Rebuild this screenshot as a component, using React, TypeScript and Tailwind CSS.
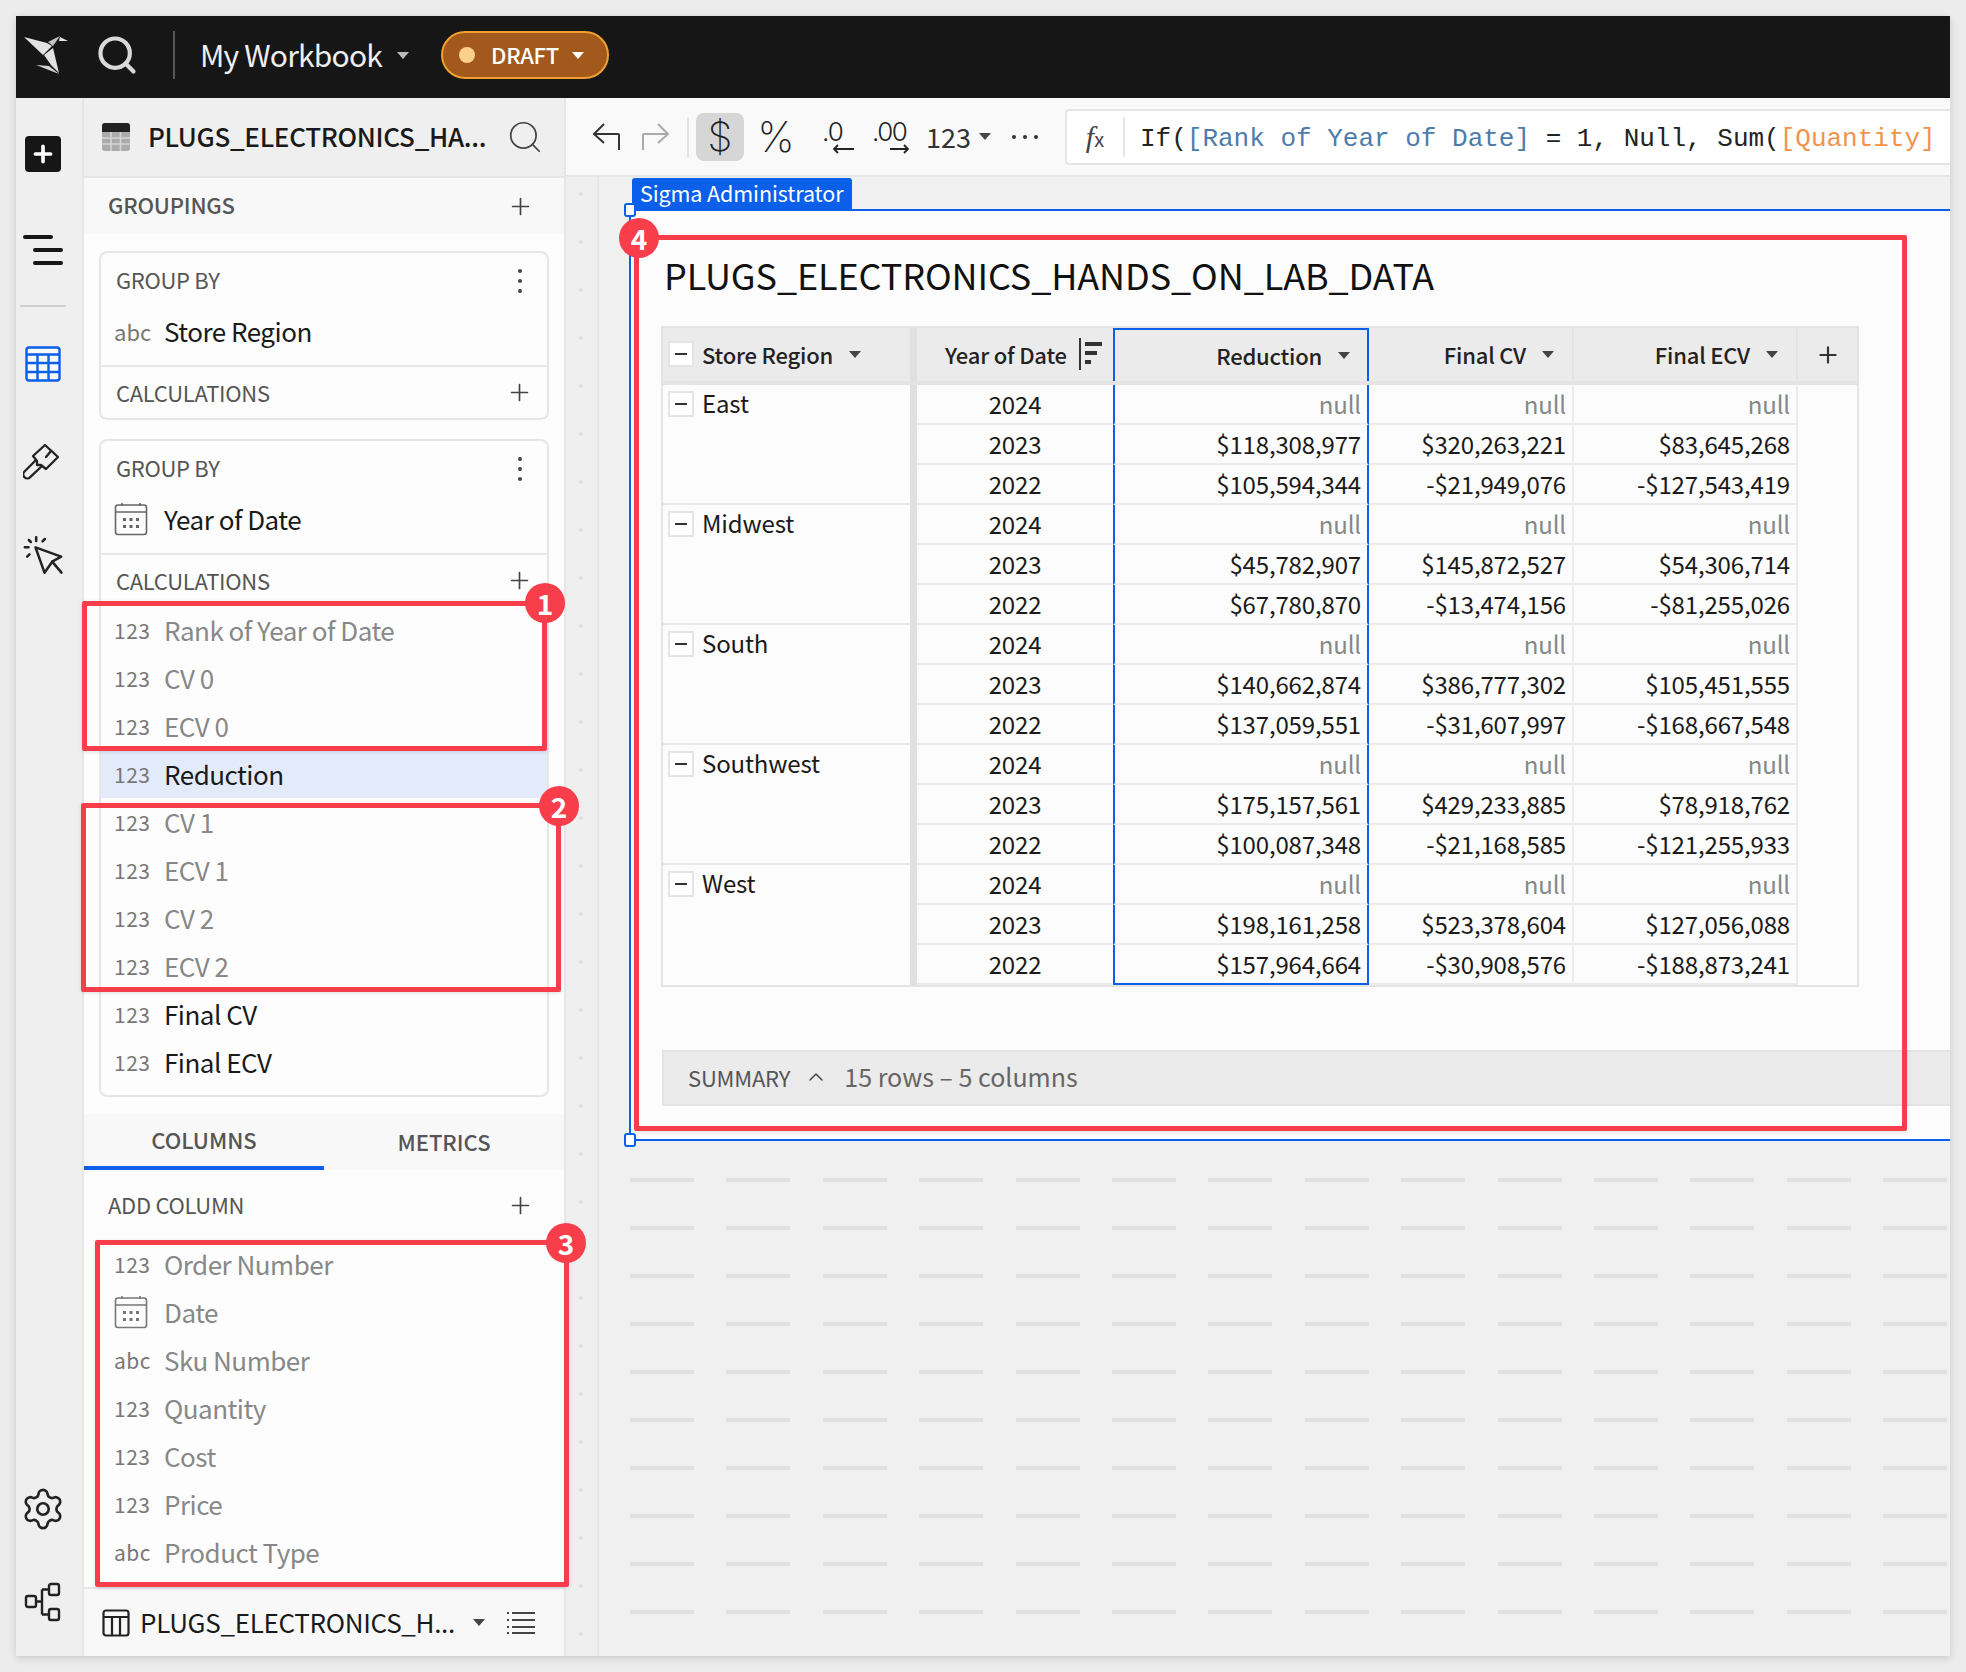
import { Search, Settings, Plus, ChevronUp } from 'lucide-react';

const tableRows = [
  { region: 'East', rows: [['2024', 'null', 'null', 'null'], ['2023', '$118,308,977', '$320,263,221', '$83,645,268'], ['2022', '$105,594,344', '-$21,949,076', '-$127,543,419']] },
  { region: 'Midwest', rows: [['2024', 'null', 'null', 'null'], ['2023', '$45,782,907', '$145,872,527', '$54,306,714'], ['2022', '$67,780,870', '-$13,474,156', '-$81,255,026']] },
  { region: 'South', rows: [['2024', 'null', 'null', 'null'], ['2023', '$140,662,874', '$386,777,302', '$105,451,555'], ['2022', '$137,059,551', '-$31,607,997', '-$168,667,548']] },
  { region: 'Southwest', rows: [['2024', 'null', 'null', 'null'], ['2023', '$175,157,561', '$429,233,885', '$78,918,762'], ['2022', '$100,087,348', '-$21,168,585', '-$121,255,933']] },
  { region: 'West', rows: [['2024', 'null', 'null', 'null'], ['2023', '$198,161,258', '$523,378,604', '$127,056,088'], ['2022', '$157,964,664', '-$30,908,576', '-$188,873,241']] },
];

const calcFields = [
  { type: '123', label: 'Rank of Year of Date', muted: true },
  { type: '123', label: 'CV 0', muted: true },
  { type: '123', label: 'ECV 0', muted: true },
  { type: '123', label: 'Reduction', selected: true },
  { type: '123', label: 'CV 1', muted: true },
  { type: '123', label: 'ECV 1', muted: true },
  { type: '123', label: 'CV 2', muted: true },
  { type: '123', label: 'ECV 2', muted: true },
  { type: '123', label: 'Final CV' },
  { type: '123', label: 'Final ECV' },
];

const columnFields = [
  { type: '123', label: 'Order Number' },
  { type: 'date', label: 'Date' },
  { type: 'abc', label: 'Sku Number' },
  { type: '123', label: 'Quantity' },
  { type: '123', label: 'Cost' },
  { type: '123', label: 'Price' },
  { type: 'abc', label: 'Product Type' },
];

function Caret({ className = 'border-t-[#555]' }: { className?: string }) {
  return <span className={`block w-0 h-0 border-x-[6px] border-x-transparent border-t-[7px] ${className}`} />;
}

function CalendarIcon({ muted }: { muted?: boolean }) {
  return (
    <svg width="34" height="34" viewBox="0 0 34 34" fill="none" stroke={muted ? '#777' : '#666'} strokeWidth="1.6">
      <rect x="1.5" y="3" width="31" height="29.5" rx="2.5" />
      <path d="M1.5 10h31M8 1v3M26 1v3" />
      <g fill={muted ? '#777' : '#666'} stroke="none">
        <rect x="9" y="16" width="3" height="3" /><rect x="15.5" y="16" width="3" height="3" /><rect x="22" y="16" width="3" height="3" />
        <rect x="9" y="23" width="3" height="3" /><rect x="15.5" y="23" width="3" height="3" /><rect x="22" y="23" width="3" height="3" />
      </g>
    </svg>
  );
}

function Field({ type, label, muted, selected }: { type: string; label: string; muted?: boolean; selected?: boolean }) {
  return (
    <div className={`flex items-center h-12 pl-[13px] ${selected ? 'bg-[#e3eafa]' : ''}`}>
      <span className="w-[50px] shrink-0 flex items-center">
        {type === 'date' ? <CalendarIcon muted={muted} /> : <span className="text-[21px] leading-none tracking-[0.5px] text-[#777]">{type}</span>}
      </span>
      <span className={`text-[26px] leading-none tracking-[-0.5px] ${muted ? 'text-[#888]' : 'text-[#1a1a1a]'}`}>{label}</span>
    </div>
  );
}

function PanelPlus() {
  return <Plus size={27} strokeWidth={1.5} className="text-[#444] -mr-[2px]" />;
}

function GroupCard({ type, label, date, children }: { type?: string; label: string; date?: boolean; children?: React.ReactNode }) {
  return (
    <div className="mx-[15px] border-2 border-[#e6e6e6] rounded-lg bg-[#fdfdfd]">
      <div className="h-[55px] flex items-center justify-between pl-[15px] pr-[18px]">
        <span className="text-[22px] tracking-[-0.3px] text-[#555] -mt-[2px]">GROUP BY</span>
        <span className="flex flex-col gap-[6px] pr-[7px]">
          <i className="block w-[4px] h-[4px] rounded-full bg-[#444]" />
          <i className="block w-[4px] h-[4px] rounded-full bg-[#444]" />
          <i className="block w-[4px] h-[4px] rounded-full bg-[#444]" />
        </span>
      </div>
      <div className="flex items-center h-12 pl-[13px] pb-[2px] mb-[9px]">
        <span className="w-[50px] shrink-0 flex items-center">
          {date ? <CalendarIcon /> : <span className="text-[22px] leading-none text-[#777]">{type}</span>}
        </span>
        <span className="text-[26px] leading-none tracking-[-0.5px] text-[#1a1a1a]">{label}</span>
      </div>
      <div className="border-t-2 border-[#e6e6e6]">
        <div className="h-[51px] flex items-center justify-between pl-[15px] pr-[16px]">
          <span className="text-[22px] tracking-[-0.3px] text-[#555]">CALCULATIONS</span>
          <PanelPlus />
        </div>
        {children}
      </div>
    </div>
  );
}

function Minus() {
  return (
    <span className="w-[26px] h-[26px] shrink-0 bg-white border-2 border-[#e4e4e4] flex items-center justify-center">
      <i className="block w-[12px] h-[2px] bg-[#333]" />
    </span>
  );
}

function Rail() {
  return (
    <aside className="w-[68px] shrink-0 bg-[#efefef] border-r-2 border-[#e6e6e6] flex flex-col items-center pt-[38px] pb-[34px] pr-[12px]">
      <span className="w-[36px] h-[36px] bg-[#161616] rounded-[4px] flex items-center justify-center">
        <Plus size={26} strokeWidth={3.4} className="text-white" />
      </span>
      <span className="mt-[63px] w-[40px] flex flex-col gap-[9px] items-end">
        <i className="block w-[30px] h-[4px] rounded-full bg-[#161616] self-start" />
        <i className="block w-[30px] h-[4px] rounded-full bg-[#161616]" />
        <i className="block w-[30px] h-[4px] rounded-full bg-[#161616]" />
      </span>
      <span className="mt-[40px] w-[46px] h-[2px] bg-[#cfcfcf]" />
      <svg className="mt-[39px]" width="36" height="36" viewBox="0 0 36 36" fill="#fbfbfb" stroke="#0b5fe8" strokeWidth="2.4">
        <rect x="1.500" y="1.500" width="33" height="33" rx="2.500" />
        <path d="M1.500 8.500h33M1.500 17h33M1.500 26h33M12.500 8.500V34.500M23.500 8.500V34.500" />
      </svg>
      <svg className="mt-[59px]" width="40" height="40" viewBox="8 10 40 40" fill="none" stroke="#222" strokeWidth="2.3" strokeLinejoin="round" strokeLinecap="round">
        <path d="M30 14l13 12-12 12-5-4-4 0 0-4-4-5z" />
        <path d="M36 20l-5 6" />
        <path d="M21 29L9.500 40.500a4 4 0 0 0 5.700 5.700L27 35" />
      </svg>
      <svg className="mt-[54px]" width="42" height="40" viewBox="15 315 125 120" fill="none" stroke="#222" strokeWidth="7.500" strokeLinejoin="round" strokeLinecap="round">
        <path d="M35 330l6 6M57 322v11M83 327l-7 7M23 352h11M30 380l7-7" />
        <path d="M55 352l77 28-27 15-23 33z" />
        <path d="M105 395l28 33" />
      </svg>
      <span className="flex-1" />
      <Settings size={46} strokeWidth={1.4} color="#222" />
      <svg className="mt-[50px]" width="38" height="40" viewBox="0 0 38 40" fill="none" stroke="#222" strokeWidth="2.4">
        <rect x="2" y="14" width="10" height="11" rx="2" />
        <rect x="25" y="2" width="10" height="11" rx="2" />
        <rect x="25" y="27" width="10" height="11" rx="2" />
        <path d="M12 19.500h6M18 7.500h7M18 32.500h7M18 7.500v25" />
      </svg>
    </aside>
  );
}

function Panel() {
  return (
    <aside className="w-[482px] shrink-0 bg-[#fdfdfd] border-r-2 border-[#e6e6e6] flex flex-col">
      <div className="h-[80px] shrink-0 bg-[#efefef] border-b-2 border-[#e6e6e6] flex items-center pl-[18px] pr-[20px]">
        <svg width="28" height="28" viewBox="0 0 28 28" className="shrink-0">
          <rect width="28" height="28" rx="3" fill="#ababab" />
          <path d="M0 3a3 3 0 0 1 3-3h22a3 3 0 0 1 3 3v6H0z" fill="#222" />
          <path d="M0 15h28M0 21h28M9 9v19M18.500 9v19" stroke="#d5d5d5" strokeWidth="1.600" />
        </svg>
        <span className="ml-[18px] -mt-[3px] flex-1 text-[26px] font-medium tracking-[-0.3px] text-[#1a1a1a] whitespace-nowrap">PLUGS_ELECTRONICS_HA...</span>
        <Search size={38} strokeWidth={1.1} className="text-[#444]" />
      </div>
      <div className="h-[56px] shrink-0 bg-[#f8f8f8] flex items-center justify-between pl-[24px] pr-[32px]">
        <span className="text-[22px] font-medium tracking-[-0.2px] text-[#555] -mt-[3px]">GROUPINGS</span>
        <PanelPlus />
      </div>
      <div className="mt-[17px]">
        <GroupCard type="abc" label="Store Region" />
      </div>
      <div className="mt-[19px]">
        <GroupCard date label="Year of Date">
          <div className="pb-[9px]">
            {calcFields.map((f) => <Field key={f.label} {...f} />)}
          </div>
        </GroupCard>
      </div>
      <div className="mt-[17px] h-[56px] shrink-0 bg-[#f8f8f8] flex">
        <div className="w-[240px] border-b-4 border-[#0b5fe8] flex items-center justify-center pb-[2px] text-[22px] font-medium text-[#555]">COLUMNS</div>
        <div className="w-[240px] flex items-center justify-center pb-[1px] text-[22px] font-medium text-[#555]">METRICS</div>
      </div>
      <div className="h-[70px] shrink-0 flex items-center justify-between pl-[24px] pr-[32px]">
        <span className="text-[22px] tracking-[-0.3px] text-[#555] -mt-[2px]">ADD COLUMN</span>
        <PanelPlus />
      </div>
      <div className="pl-[17px]">
        {columnFields.map((f) => <Field key={f.label} {...f} muted />)}
      </div>
      <div className="mt-auto h-[69px] shrink-0 bg-[#f8f8f8] border-t-2 border-[#e6e6e6] flex items-center pl-[18px]">
        <svg width="28" height="28" viewBox="0 0 28 28" fill="none" stroke="#222" strokeWidth="2.2" className="shrink-0">
          <rect x="1.500" y="1.500" width="25" height="25" rx="2.500" />
          <path d="M1.500 8h25M10 8v19M18 8v19" />
        </svg>
        <span className="ml-[10px] -mt-[2px] w-[333px] text-[26px] tracking-[-0.3px] text-[#1a1a1a] whitespace-nowrap">PLUGS_ELECTRONICS_H...</span>
        <Caret className="border-t-[#444]" />
        <svg className="ml-[22px]" width="28" height="24" viewBox="0 0 28 24" stroke="#444" strokeWidth="2">
          <path d="M5 2h23M5 9h23M5 16h23M5 22h23" />
          <path d="M0 2h2M0 9h2M0 16h2M0 22h2" />
        </svg>
      </div>
    </aside>
  );
}

function Toolbar() {
  return (
    <div className="h-[79px] shrink-0 bg-[#f9f9f9] border-b-2 border-[#e6e6e6] flex items-center pl-[26px]">
      <svg width="28" height="30" viewBox="0 0 28 30" fill="none" stroke="#333" strokeWidth="2">
        <path d="M27 28V13a1 1 0 0 0-1-1H3M12 2L2 12l10 9" />
      </svg>
      <svg className="ml-[22px]" width="28" height="30" viewBox="0 0 28 30" fill="none" stroke="#aaa" strokeWidth="2">
        <path d="M1 28V13a1 1 0 0 1 1-1h23M16 2l10 10-10 9" />
      </svg>
      <span className="ml-[17px] w-[2px] h-[40px] bg-[#e2e2e2]" />
      <span className="ml-[7px] w-[48px] h-[48px] rounded-lg bg-[#d6d6d6] flex items-center justify-center font-['Inter',sans-serif] text-[40px] font-extralight leading-none text-[#222]">$</span>
      <span className="ml-[10px] w-[44px] text-center font-['Inter',sans-serif] text-[42px] font-extralight leading-none text-[#222]">%</span>
      <span className="ml-[22px] w-[34px] flex flex-col items-start leading-none text-[#222]">
        <span className="ml-[2px] font-['Inter',sans-serif] text-[26px] leading-[24px] font-light tracking-[-1px]">.0</span>
        <svg className="self-end" width="22" height="10" viewBox="0 0 22 10" fill="none" stroke="#222" strokeWidth="1.800"><path d="M22 5H2M6 1L2 5l4 4" /></svg>
      </span>
      <span className="ml-[16px] w-[40px] flex flex-col items-start leading-none text-[#222]">
        <span className="ml-[2px] font-['Inter',sans-serif] text-[26px] leading-[24px] font-light tracking-[-1.5px]">.00</span>
        <svg className="self-end" width="20" height="10" viewBox="0 0 20 10" fill="none" stroke="#222" strokeWidth="1.800"><path d="M0 5h18M14 1l4 4-4 4" /></svg>
      </span>
      <span className="ml-[16px] text-[27px] leading-none text-[#333]">123</span>
      <span className="ml-[8px]"><Caret className="border-t-[#444]" /></span>
      <span className="ml-[21px] flex gap-[7px]">
        <i className="block w-[4px] h-[4px] rounded-full bg-[#333]" />
        <i className="block w-[4px] h-[4px] rounded-full bg-[#333]" />
        <i className="block w-[4px] h-[4px] rounded-full bg-[#333]" />
      </span>
      <div className="ml-[27px] flex-1 h-[56px] bg-white border-2 border-r-0 border-[#e6e6e6] rounded-l-[4px] flex items-center">
        <span className="w-[56px] shrink-0 text-center font-['Liberation_Serif',serif] italic text-[#444] text-[30px] leading-none">f<span className="not-italic font-['Noto_Sans_CJK_SC',sans-serif] text-[20px]">x</span></span>
        <span className="w-[2px] h-[40px] bg-[#e6e6e6]" />
        <span className="ml-[15px] pt-[4px] font-['Liberation_Mono',monospace] text-[26px] leading-none whitespace-pre text-[#222]">
          If(<span className="text-[#4d7cab]">[Rank of Year of Date]</span> = 1, Null, Sum(<span className="text-[#f2934b]">[Quantity]</span>
        </span>
      </div>
    </div>
  );
}

function DataTable() {
  return (
    <div className="w-[1198px] border-2 border-[#e4e4e4] border-t-[2px]">
      <div className="flex h-[57px] bg-[#ebebeb] border-b-4 border-[#e4e4e4] text-[22px] tracking-[-0.2px] font-medium text-[#222]">
        <div className="w-[247px] shrink-0 flex items-center pl-[5px] pb-[1px]">
          <Minus />
          <span className="ml-[8px]">Store Region</span>
          <span className="ml-[16px]"><Caret className="border-t-[#444]" /></span>
        </div>
        <div className="w-[7px] shrink-0 bg-[#e0e0e0]" />
        <div className="w-[196px] shrink-0 flex items-center pl-[28px] pb-[1px]">
          <span>Year of Date</span>
          <svg className="ml-[12px]" width="24" height="32" viewBox="0 0 24 32" fill="#333">
            <rect x="0" y="0" width="2" height="32" /><rect x="6" y="4" width="17" height="4" /><rect x="6" y="13" width="12" height="4" /><rect x="6" y="22" width="6" height="4" />
          </svg>
        </div>
        <div className="w-[256px] shrink-0 flex items-center justify-end gap-[16px] pr-[17px] pb-[1px] border-x-2 border-t-2 border-[#0b5fe8]">
          <span>Reduction</span><Caret className="border-t-[#444]" />
        </div>
        <div className="w-[205px] shrink-0 flex items-center justify-end gap-[16px] pr-[18px] pb-[1px] border-r-2 border-[#e4e4e4]">
          <span>Final CV</span><Caret className="border-t-[#444]" />
        </div>
        <div className="w-[224px] shrink-0 flex items-center justify-end gap-[16px] pr-[18px] pb-[1px] border-r-2 border-[#e4e4e4]">
          <span>Final ECV</span><Caret className="border-t-[#444]" />
        </div>
        <div className="flex-1 flex items-center justify-center"><Plus size={26} strokeWidth={2} className="text-[#333]" /></div>
      </div>
      {tableRows.map((group, gi) => (
        <div key={group.region} className="flex text-[24px] tracking-[-0.15px] leading-none text-[#1a1a1a]">
          <div className={`w-[247px] shrink-0 flex items-start pl-[5px] pt-[6px] ${gi < tableRows.length - 1 ? 'border-b-2 border-[#e8e8e8]' : ''}`}>
            <Minus />
            <span className="ml-[8px]">{group.region}</span>
          </div>
          <div className="w-[7px] shrink-0 bg-[#e0e0e0]" />
          <div className="flex-1 min-w-0">
            {group.rows.map((row, ri) => (
              <div key={row[0]} className="flex h-10">
                <div className="w-[196px] shrink-0 flex items-center justify-center pb-[1px] border-b-2 border-[#ececec]">{row[0]}</div>
                <div className={`w-[256px] shrink-0 flex items-center justify-end pr-[6px] pb-[1px] border-x-2 border-[#0b5fe8] ${gi === tableRows.length - 1 && ri === 2 ? 'border-b-2 border-b-[#0b5fe8]' : 'border-b-2 border-b-[#ececec]'} ${row[1] === 'null' ? 'text-[#888]' : ''}`}>{row[1]}</div>
                <div className={`w-[205px] shrink-0 flex items-center justify-end pr-[6px] pb-[1px] border-r-2 border-b-2 border-[#ececec] ${row[2] === 'null' ? 'text-[#888]' : ''}`}>{row[2]}</div>
                <div className={`w-[224px] shrink-0 flex items-center justify-end pr-[6px] pb-[1px] border-r-2 border-b-2 border-[#ececec] ${row[3] === 'null' ? 'text-[#888]' : ''}`}>{row[3]}</div>
              </div>
            ))}
          </div>
        </div>
      ))}
    </div>
  );
}

function Canvas() {
  return (
    <div className="flex-1 min-h-0 flex overflow-hidden">
      <div className="w-[33px] shrink-0 bg-[#efefef] border-r-2 border-[#e6e6e6] flex flex-col items-center gap-[44px] pt-[15px] pr-[2px]">
        {Array.from({ length: 31 }).map((_, i) => (
          <i key={i} className="block w-[4px] h-[4px] shrink-0 rounded-full bg-[#e0e0e0]" />
        ))}
      </div>
      <div className="flex-1 min-w-0 bg-[#f0f0f0] overflow-hidden">
        <div className="ml-[33px] mt-[1px] w-[220px] h-[31px] bg-[#0b5fe8] rounded-t-[3px] flex items-center pl-[8px] pb-[2px] text-[21.5px] tracking-[-0.1px] leading-none whitespace-nowrap text-white">Sigma Administrator</div>
        <div className="relative ml-[30px] h-[932px] bg-[#fcfcfc] border-2 border-r-0 border-[#0b5fe8]">
          <span className="absolute -left-[7px] -top-[8px] w-[12px] h-[14px] rounded-[3px] bg-white border-2 border-[#0b5fe8]" />
          <span className="absolute -left-[7px] -bottom-[8px] w-[12px] h-[14px] rounded-[3px] bg-white border-2 border-[#0b5fe8]" />
          <div className="pl-[30px] pt-[41px]">
            <h1 className="ml-[3px] text-[36px] leading-[44px] tracking-[-0.1px] font-normal text-[#111]">PLUGS_ELECTRONICS_HANDS_ON_LAB_DATA</h1>
            <div className="mt-[30px]"><DataTable /></div>
            <div className="ml-[1px] mt-[63px] h-[56px] bg-[#ebebeb] border-2 border-r-0 border-[#e3e3e3] flex items-center pl-[24px] pb-[2px]">
              <span className="text-[22px] tracking-[-0.2px] text-[#555]">SUMMARY</span>
              <ChevronUp className="ml-[14px]" size={24} strokeWidth={1.5} color="#444" />
              <span className="ml-[16px] text-[25px] text-[#666]">15 rows – 5 columns</span>
            </div>
          </div>
        </div>
        <div className="mt-[37px] ml-[31px] flex flex-col gap-[44px]">
          {Array.from({ length: 10 }).map((_, r) => (
            <div key={r} className="flex gap-[32.4px]">
              {Array.from({ length: 14 }).map((_, c) => (
                <i key={c} className="block w-[64px] h-[4px] shrink-0 bg-[#e0e0e0]" />
              ))}
            </div>
          ))}
        </div>
      </div>
    </div>
  );
}

const boxes = [
  { n: 1, box: 'left-[82px] top-[601px] w-[465px] h-[150px]', badge: 'left-[525px] top-[583px]' },
  { n: 2, box: 'left-[81px] top-[803px] w-[480px] h-[189px]', badge: 'left-[539px] top-[786px]' },
  { n: 3, box: 'left-[95px] top-[1240px] w-[474px] h-[347px]', badge: 'left-[546px] top-[1223px]' },
  { n: 4, box: 'left-[634px] top-[235px] w-[1273px] h-[896px]', badge: 'left-[619px] top-[218px]' },
];

export default function App() {
  return (
    <div className="relative w-[1966px] h-[1672px] p-4 bg-[#ececec] font-['Noto_Sans_CJK_SC','Noto_Sans',sans-serif] overflow-hidden">
      <div className="w-[1934px] h-[1640px] flex flex-col shadow-[0_2px_8px_rgba(0,0,0,0.15)] overflow-hidden">
        <header className="h-[82px] shrink-0 bg-[#161616] flex items-center pl-[8px] pb-[4px]">
          <svg width="48" height="44" viewBox="8 8 48 44">
            <polygon points="8,12 31,18 36,21 27,30" fill="#e2e2e2" />
            <polygon points="32,17 44,11 37,21" fill="#c4c4c4" />
            <polygon points="44,12 52,16 43,16" fill="#e2e2e2" />
            <polygon points="37,23 43,48 35,40 28,30" fill="#e2e2e2" />
            <polygon points="20,40 33,41 43,49" fill="#d2d2d2" />
          </svg>
          <Search className="ml-[23px]" size={44} strokeWidth={2.3} color="#d9d9d9" />
          <span className="ml-[34px] w-[2px] h-[48px] bg-[#555]" />
          <span className="ml-[25px] -mt-[2px] text-[30px] tracking-[-0.8px] leading-none text-[#eee]">My Workbook</span>
          <span className="ml-[15px]"><Caret className="border-t-[#bbb]" /></span>
          <div className="ml-[32px] h-[48px] w-[168px] rounded-full bg-[#a3591c] border-2 border-[#f0a030] flex items-center pl-[16px]">
            <i className="block w-[16px] h-[16px] rounded-full bg-[#fbd08a]" />
            <span className="ml-[16px] -mt-[2px] text-[22px] font-medium tracking-[-0.3px] leading-none text-white">DRAFT</span>
            <span className="ml-[13px]"><Caret className="border-t-white" /></span>
          </div>
        </header>
        <div className="flex-1 min-h-0 flex">
          <Rail />
          <Panel />
          <main className="flex-1 min-w-0 flex flex-col">
            <Toolbar />
            <Canvas />
          </main>
        </div>
      </div>
      {boxes.map((b) => (
        <div key={b.n}>
          <div className={`absolute ${b.box} border-[5px] border-[#f83e4b] rounded-[2px] shadow-[0_1px_4px_rgba(0,0,0,0.12)]`} />
          <div className={`absolute ${b.badge} w-[40px] h-[40px] rounded-full bg-[#f83e4b] flex items-center justify-center text-[28px] font-bold leading-none text-white`}>{b.n}</div>
        </div>
      ))}
    </div>
  );
}
